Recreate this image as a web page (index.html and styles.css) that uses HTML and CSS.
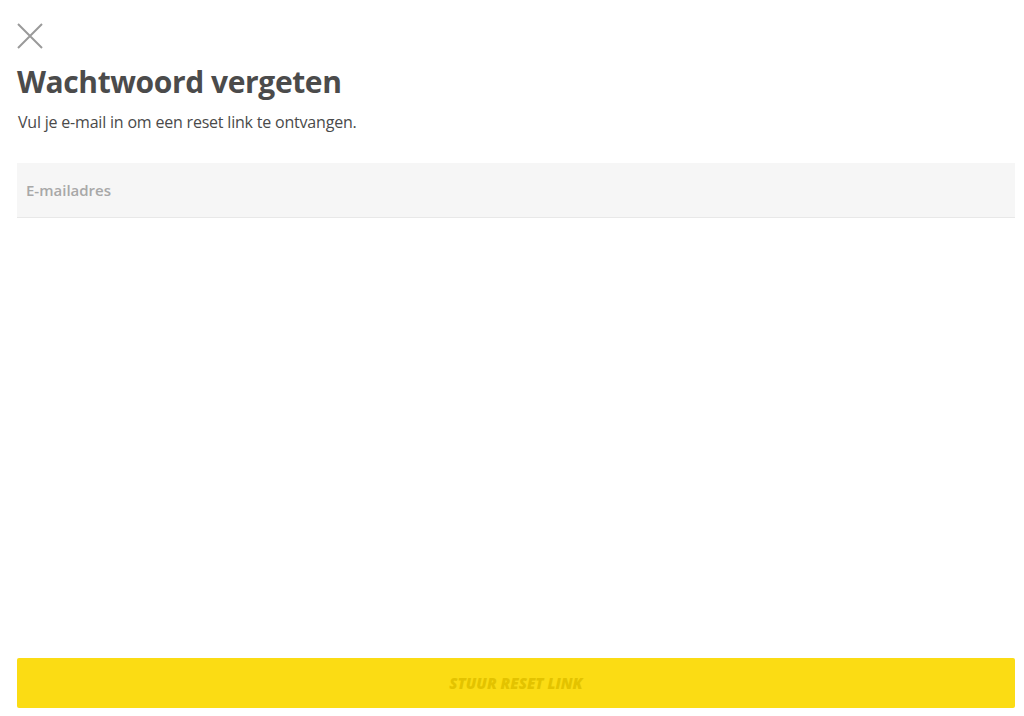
FILE: index.html
```html
<!DOCTYPE html>
<html lang="nl">
<head>
<meta charset="utf-8">
<title>Wachtwoord vergeten</title>
<link rel="stylesheet" href="styles.css">
</head>
<body>
<main class="page">
  <button class="close" type="button" aria-label="Sluiten">
    <svg width="26" height="26" viewBox="0 0 26 26" aria-hidden="true">
      <path d="M1 1 L25 25 M25 1 L1 25" stroke="#9a9a9a" stroke-width="2" fill="none"/>
    </svg>
  </button>
  <h1 class="title">Wachtwoord vergeten</h1>
  <p class="subtitle">Vul je e-mail in om een reset link te ontvangen.</p>
  <div class="field">
    <input class="input" type="email" placeholder="E-mailadres">
  </div>
  <div class="spacer"></div>
  <button class="submit" type="button">STUUR RESET LINK</button>
</main>
</body>
</html>
```
FILE: styles.css
```css
html, body {
  margin: 0;
  padding: 0;
  background: #ffffff;
}
body {
  font-family: "Open Sans", "Liberation Sans", sans-serif;
  color: #4a4a4a;
}
.page {
  box-sizing: border-box;
  height: 716px;
  padding: 23px 9px 8px 17px;
  display: flex;
  flex-direction: column;
}
.close {
  align-self: flex-start;
  width: 26px;
  height: 26px;
  padding: 0;
  border: 0;
  background: none;
  display: block;
}
.close svg { display: block; }
.title {
  margin: 14px 0 0 0;
  font-size: 30px;
  line-height: 38px;
  font-weight: 700;
  color: #4b4b4b;
  letter-spacing: -0.4px;
}
.subtitle {
  margin: 10px 0 0 1px;
  font-size: 16px;
  line-height: 22px;
  color: #4a4a4a;
  letter-spacing: -0.2px;
}
.field {
  margin-top: 30px;
}
.input {
  box-sizing: border-box;
  width: 100%;
  height: 55px;
  border: 0;
  border-bottom: 1px solid #e8e8e8;
  background: #f6f6f6;
  padding: 0 9px;
  font-family: inherit;
  font-size: 15px;
  color: #4a4a4a;
  outline: none;
}
.input::placeholder {
  color: #a8a8a8;
  font-weight: 600;
}
.spacer { flex: 1; }
.submit {
  width: 100%;
  height: 50px;
  border: 0;
  border-radius: 2px;
  background: #fbdc14;
  color: #e3c300;
  font-family: inherit;
  font-size: 15px;
  font-weight: 800;
  font-style: italic;
  padding: 0;
}
```
